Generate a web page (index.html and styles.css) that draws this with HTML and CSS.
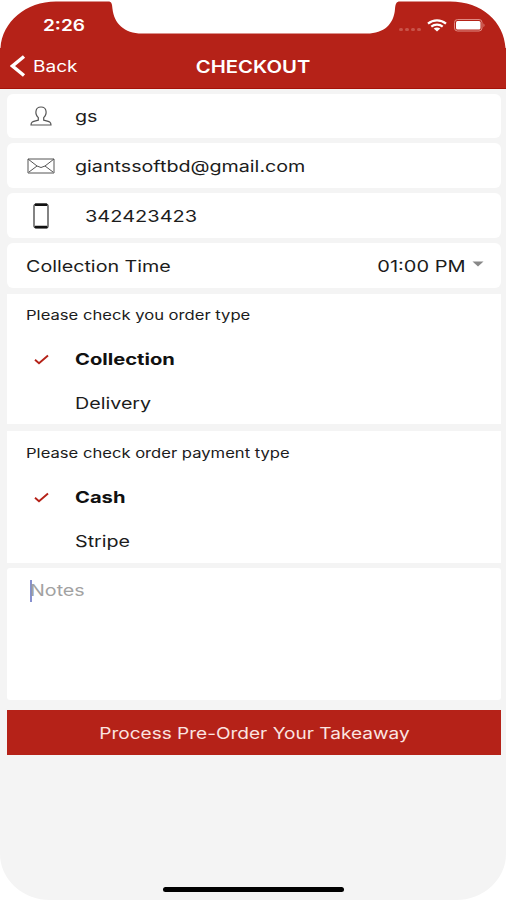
FILE: index.html
```
<!DOCTYPE html>
<html lang="en">
<head>
    <meta charset="UTF-8">
    <title>Checkout</title>
    <meta name="viewport" content="width=device-width, initial-scale=1">
    <link rel="stylesheet" href="styles.css">
</head>
<body>
    <div class="phone">
        <header class="header">
            <svg class="notch" viewBox="0 0 506 50" width="506" height="50">
                <path d="M0 0V48H.5C2 22 26 1.5 56 1.5H108C112 1.5 112 4 112.500 9C114 23 124 33.500 142 33.500H367C384 33.500 394 24 395 9C395.500 4 396 1.500 400 1.500H450C482 1.500 504 22 505.500 48H506V0Z" fill="#fff"/>
            </svg>
            <div class="status-bar">
                <span class="text time">2:26</span>
                <div class="status-icons">
                    <div class="signal"><i></i><i></i><i></i><i></i></div>
                    <svg class="wifi" viewBox="0 0 20 13" width="20" height="13">
                        <path d="M1 4.6C6 .2 14 .2 19 4.6M4.3 7.6C7.5 5 12.5 5 15.7 7.6" fill="none" stroke="#fff" stroke-width="2.2"/>
                        <path d="M6.7 9.6C8.7 8.2 11.3 8.2 13.3 9.6L10 12.5Z" fill="#fff"/>
                    </svg>
                    <svg class="battery" viewBox="0 0 32 13" width="32" height="13">
                        <rect x=".5" y=".5" width="27.5" height="11.5" rx="3" fill="none" stroke="#e08a82"/>
                        <rect x="2" y="2" width="24.5" height="8.5" rx="1.5" fill="#fff"/>
                        <path d="M29.5 4.2Q31.5 6.2 29.5 8.3Z" fill="#e08a82"/>
                    </svg>
                </div>
            </div>
            <nav class="nav-bar">
                <a class="back">
                    <svg viewBox="0 0 16 22" width="16" height="22">
                        <path d="M14 1.5L2.5 11L14 20.5" fill="none" stroke="#fff" stroke-width="3.4"/>
                    </svg>
                    <span class="text back-label">Back</span>
                </a>
                <h1 class="title"><span class="text">CHECKOUT</span></h1>
            </nav>
        </header>

        <main class="form">
            <div class="row row-name">
                <div class="row-icon">
                    <svg viewBox="0 0 22 20" width="22" height="20">
                        <path d="M1 19H21C21 15.5 19 15.5 13.7 14.2V11.6C15.4 10 16.5 7.8 16 5C15.6 2.3 13.7 1 11 1S6.4 2.3 6 5C5.5 7.8 6.6 10 8.3 11.6V14.2C3 15.5 1 15.5 1 19Z" fill="none" stroke="#555" stroke-width="1.2"/>
                    </svg>
                </div>
                <span class="text">gs</span>
            </div>
            <div class="row">
                <div class="row-icon">
                    <svg viewBox="0 0 28 16" width="28" height="16">
                        <path d="M1 1H27V15H1ZM1 1L10 8Q14 11 18 8L27 1M2 14L10 8M26 14L18 8" fill="none" stroke="#555" stroke-width="1"/>
                    </svg>
                </div>
                <span class="text">giantssoftbd@gmail.com</span>
            </div>
            <div class="row">
                <div class="row-icon">
                    <svg viewBox="0 0 16 26" width="16" height="26">
                        <rect x="1" y="1" width="14" height="24" rx="2" fill="none" stroke="#333" stroke-width="1.2"/>
                        <path d="M2 1.8H14M2 24H14" stroke="#111" stroke-width="2.6"/>
                    </svg>
                </div>
                <span class="text phone-number">342423423</span>
            </div>
            <div class="row row-time">
                <span class="text">Collection Time</span>
                <div class="time-select">
                    <span class="text">01:00 PM</span>
                    <svg viewBox="0 0 12 6" width="12" height="6"><path d="M.5 .5H11.5L6 5.5Z" fill="#888"/></svg>
                </div>
            </div>

            <section class="group">
                <h2 class="group-title"><span class="text">Please check you order type</span></h2>
                <div class="option selected">
                    <div class="check"><svg viewBox="0 0 15 11" width="15" height="11"><path d="M1 5.8L5 9.2L14 1.5" fill="none" stroke="#b52218" stroke-width="1.9"/></svg></div>
                    <span class="text">Collection</span>
                </div>
                <div class="option">
                    <div class="check"></div>
                    <span class="text">Delivery</span>
                </div>
            </section>

            <section class="group group-payment">
                <h2 class="group-title"><span class="text">Please check order payment type</span></h2>
                <div class="option selected">
                    <div class="check"><svg viewBox="0 0 15 11" width="15" height="11"><path d="M1 5.8L5 9.2L14 1.5" fill="none" stroke="#b52218" stroke-width="1.9"/></svg></div>
                    <span class="text">Cash</span>
                </div>
                <div class="option">
                    <div class="check"></div>
                    <span class="text">Stripe</span>
                </div>
            </section>

            <div class="notes"><i class="caret"></i><span class="text">Notes</span></div>
            <button class="submit"><span class="text">Process Pre-Order Your Takeaway</span></button>
        </main>
        <div class="home-indicator"></div>
    </div>
</body>
</html>
```

FILE: styles.css
```
* {
    box-sizing: border-box;
}
body {
    margin: 0;
    background: #fff;
    font-family: Inter, "Liberation Sans", sans-serif;
    font-size: 16px;
    color: #1c1c1c;
}
.phone {
    position: relative;
    display: flex;
    flex-direction: column;
    height: 900px;
    background: #f4f4f4;
    border-radius: 0 0 50px 50px / 0 0 46px 46px;
    overflow: hidden;
}
/* wide lettering */
.text {
    display: inline-block;
    white-space: nowrap;
    transform: scaleX(1.23);
    transform-origin: left center;
}

/* header */
.header {
    position: relative;
    height: 89px;
    background: #b52218;
    border-bottom: 1px solid #a51208;
    color: #fff;
}
.notch {
    position: absolute;
    top: 0;
    left: 0;
}
.status-bar {
    display: flex;
    justify-content: space-between;
    align-items: center;
    height: 44px;
    padding: 6px 20px 0 43px;
}
.time {
    font-weight: 600;
}
.status-icons {
    display: flex;
    align-items: center;
}
.signal {
    display: flex;
    gap: 2px;
    margin: 8px 6px 0 0;
}
.signal i {
    width: 4px;
    height: 3px;
    border-radius: 2px;
    background: #c9544a;
}
.wifi {
    margin-right: 7px;
}
.nav-bar {
    position: relative;
    display: flex;
    align-items: center;
    justify-content: center;
    height: 46px;
}
.back {
    position: absolute;
    left: 10px;
    top: 11px;
    display: flex;
    align-items: center;
    gap: 7px;
}
.title {
    margin: 0;
    font-size: 17px;
    font-weight: 600;
}
.title .text,
.submit .text {
    transform-origin: center;
}
.time,
.back-label,
.title .text,
.submit .text {
    transform: scaleX(1.19);
}

/* form */
.form {
    display: flex;
    flex-direction: column;
    padding: 5px 5px 0 7px;
}
.row {
    display: flex;
    align-items: center;
    height: 45px;
    margin-bottom: 5px;
    background: #fff;
    border-radius: 6px;
}
.row-name {
    height: 44px;
}
.row-icon {
    display: flex;
    justify-content: center;
    width: 68px;
}
.phone-number {
    margin-left: 10px;
    transform: scaleX(1.25);
}
.row-time {
    justify-content: space-between;
    margin-bottom: 6px;
    padding: 0 17px 0 19px;
}
.time-select {
    display: flex;
    align-items: center;
}
.time-select .text {
    transform: scaleX(1.25);
    transform-origin: right center;
    margin-right: 6px;
}
.time-select svg {
    margin-top: -3px;
}
.group {
    height: 130px;
    margin-bottom: 7px;
    background: #fff;
}
.group-payment {
    height: 132px;
    margin-bottom: 5px;
    padding-top: 1px;
}
.group-title {
    margin: 0;
    padding: 0 19px;
    font-size: 13.5px;
    font-weight: 400;
    line-height: 43px;
}
.option {
    display: flex;
    align-items: center;
    height: 44px;
}
.check {
    display: flex;
    justify-content: center;
    width: 68px;
}
.selected .text {
    font-weight: 700;
    color: #111;
    transform: scaleX(1.26);
}
.notes {
    display: flex;
    height: 132px;
    padding: 12px 23px;
    background: #fff;
    border-radius: 3px;
    color: #a2a2a2;
}
.caret {
    width: 2px;
    height: 22px;
    margin-right: -2px;
    background: #8790cf;
}
.submit {
    height: 45px;
    margin-top: 10px;
    border: 0;
    background: #b52218;
    color: #fbe4e0;
    font: inherit;
}
.home-indicator {
    width: 181px;
    height: 5px;
    margin: auto auto 8px 163px;
    border-radius: 3px;
    background: #000;
}
```
